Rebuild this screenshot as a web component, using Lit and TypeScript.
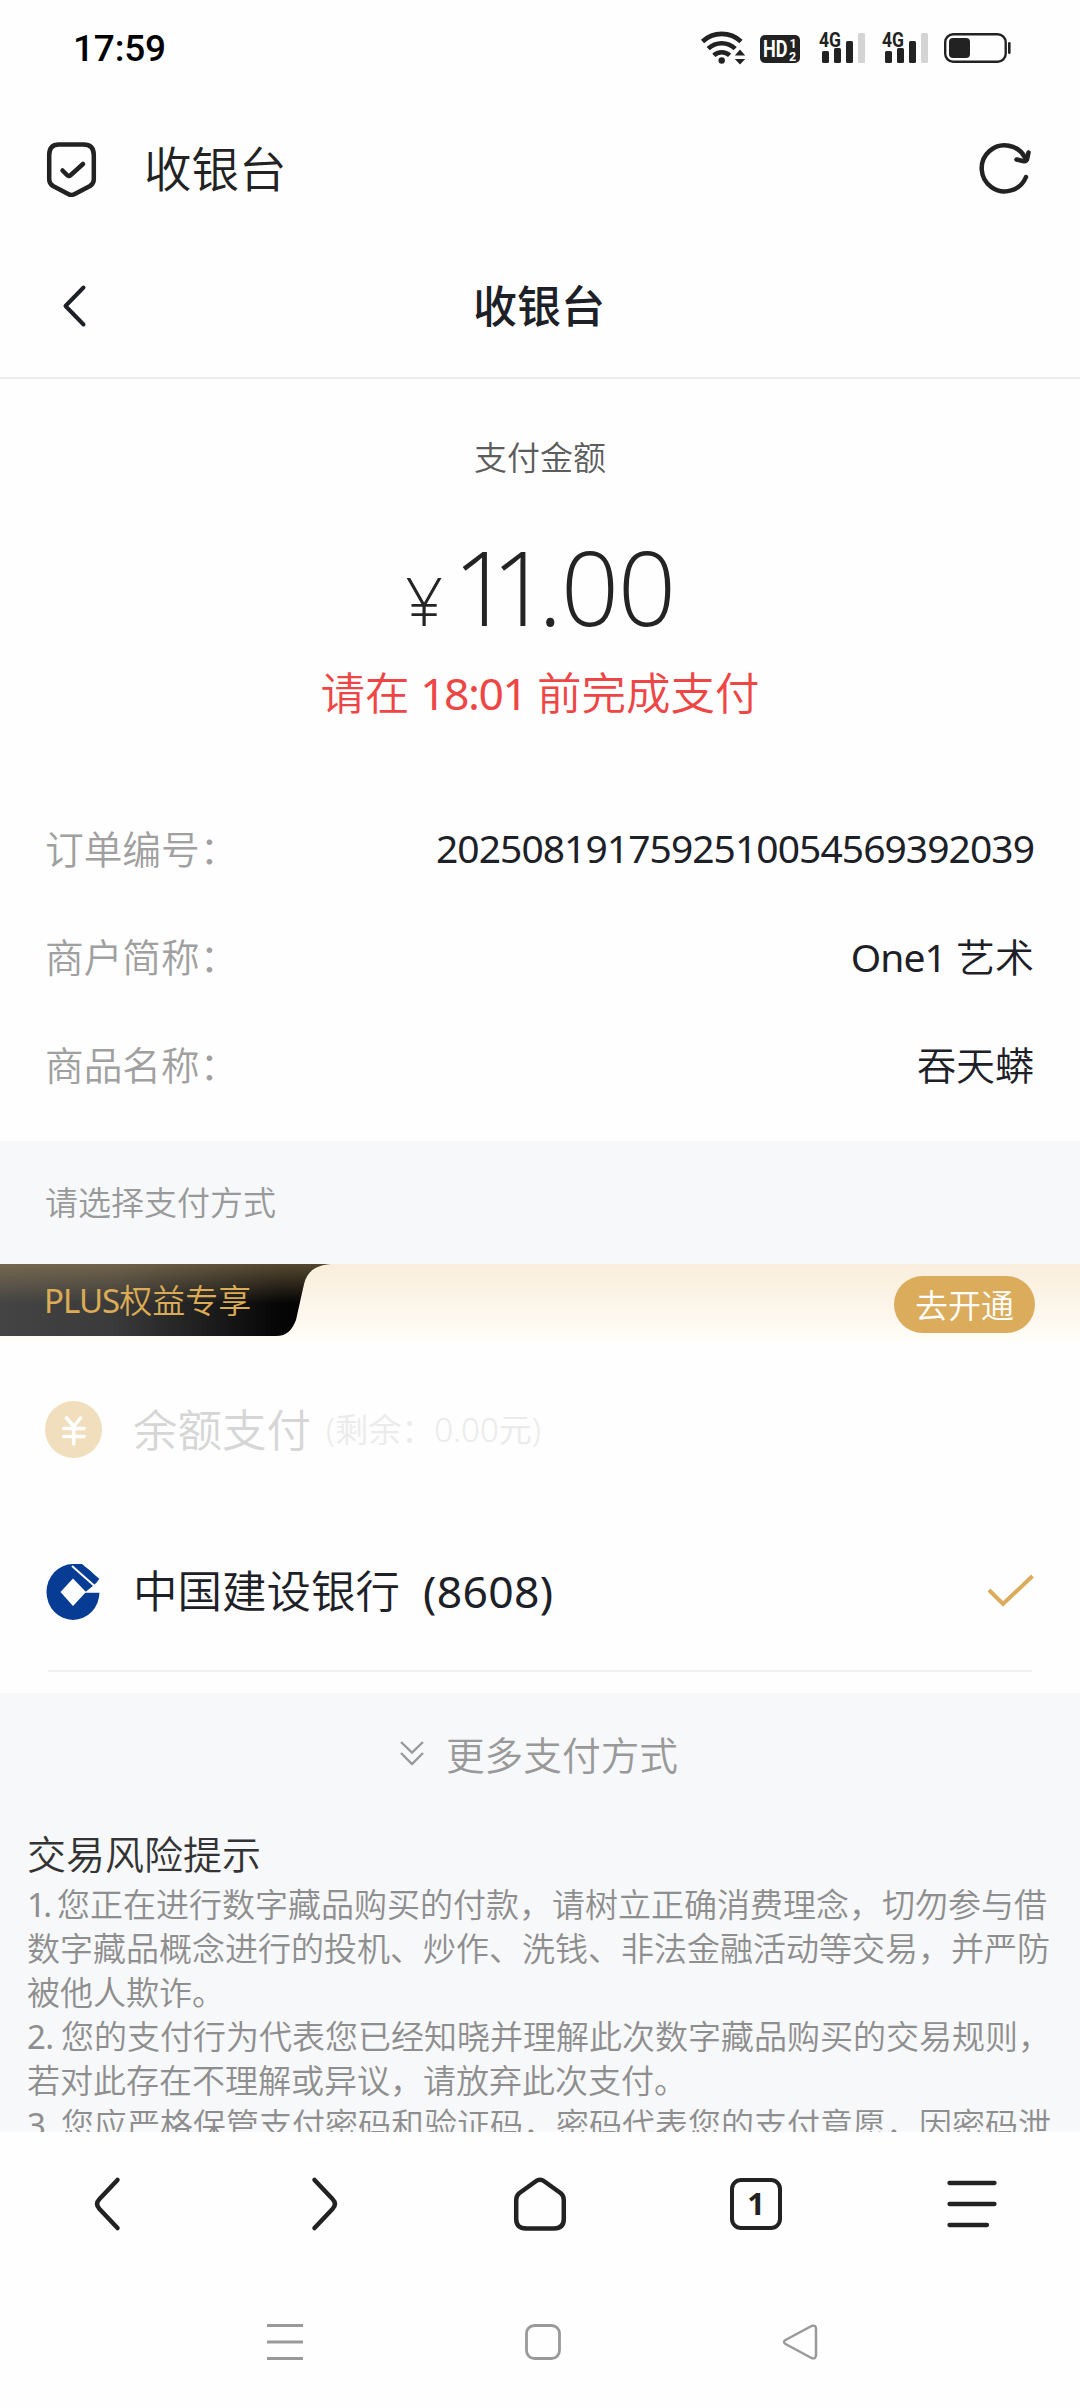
import { LitElement, html, css, svg } from "lit";
import { customElement } from "lit/decorators.js";

const ORDER_ROWS = [
  { label: "订单编号：", latin: "2025081917592510054569392039", rest: "" },
  { label: "商户简称：", latin: "One1", rest: " 艺术" },
  { label: "商品名称：", latin: "", rest: "吞天蟒" },
];

const RISK_LINES = [
  { mark: "1.", text: " 您正在进行数字藏品购买的付款，请树立正确消费理念，切勿参与借" },
  { mark: "", text: "数字藏品概念进行的投机、炒作、洗钱、非法金融活动等交易，并严防" },
  { mark: "", text: "被他人欺诈。" },
  { mark: "2.", text: " 您的支付行为代表您已经知晓并理解此次数字藏品购买的交易规则，" },
  { mark: "", text: "若对此存在不理解或异议，请放弃此次支付。" },
  { mark: "3.", text: " 您应严格保管支付密码和验证码，密码代表您的支付意愿，因密码泄" },
];

const signal = (x: number) => svg`
  <g transform="translate(${x} 0)">
    <text x="0" y="17.500" font-size="21" font-weight="700" textLength="22" lengthAdjust="spacingAndGlyphs" fill="#222">4G</text>
    <rect x="3" y="22" width="7" height="12" rx="1.5" fill="#222"/>
    <rect x="15" y="19" width="7" height="15" rx="1.5" fill="#222"/>
    <rect x="27" y="12" width="7" height="22" rx="1.5" fill="#222"/>
    <rect x="39" y="4" width="7" height="30" rx="1.5" fill="#d4d4d4"/>
  </g>`;

@customElement("status-bar")
export class StatusBar extends LitElement {
  static styles = css`
    :host {
      display: flex;
      justify-content: space-between;
      height: 97px;
      padding: 0 67px 0 73px;
      box-sizing: border-box;
    }
    .time {
      font-family: Roboto, "Noto Sans", sans-serif;
      font-size: 37px;
      font-weight: 500;
      line-height: 98px;
      letter-spacing: -0.200px;
      color: #000;
    }
    .icons {
      display: block;
      overflow: visible;
      margin-top: 29px;
      font-family: Roboto, "Liberation Sans", sans-serif;
    }
  `;
  render() {
    return html`
      <span class="time">17:59</span>
      <svg class="icons" width="314" height="40" viewBox="0 0 314 40">
        <g fill="none" stroke="#222" stroke-width="4.6">
          <path d="M3.5 12.5a28 28 0 0 1 38.500 0"/>
          <path d="M9.200 19.700a19.500 19.500 0 0 1 27 0"/>
          <path d="M14.800 26.400a11.500 11.500 0 0 1 15.800 0"/>
        </g>
        <circle cx="22.700" cy="31.500" r="3.200" fill="#222"/>
        <path d="M41 20.500l5.200 6h-10.400zM41 35.500l5.200-5.500h-10.400z" fill="#222"/>
        <rect x="61" y="6" width="40" height="28" rx="5" fill="#222"/>
        <text x="64" y="28.200" font-size="23" font-weight="700" fill="#fff" textLength="24.500" lengthAdjust="spacingAndGlyphs">HD</text>
        <text x="90.500" y="18.800" font-size="12.500" font-weight="700" fill="#fff">1</text>
        <text x="90" y="31.500" font-size="12.500" font-weight="700" fill="#fff">2</text>
        ${signal(120)} ${signal(183)}
        <rect x="246.200" y="5.200" width="60.500" height="27.600" rx="8" fill="none" stroke="#222" stroke-width="2.400"/>
        <rect x="250" y="9" width="21" height="20" rx="4" fill="#222"/>
        <rect x="309" y="13" width="2.600" height="12" rx="1.300" fill="#222"/>
      </svg>
    `;
  }
}

@customElement("pay-methods")
export class PayMethods extends LitElement {
  static styles = css`
    :host {
      display: block;
      height: 429px;
      background: #fefefe;
    }
    .plus {
      display: flex;
      justify-content: space-between;
      height: 83px;
      padding-right: 45px;
      background: linear-gradient(#f9eedb 0%, #fcf5ea 50%, #fffdf7 90%, #fefefe 100%);
    }
    .tab {
      display: grid;
      width: 332px;
      height: 72px;
    }
    .tab > * {
      grid-area: 1 / 1;
    }
    .tab-text {
      padding-left: 44px;
      line-height: 74px;
      font-size: 33px;
      color: #dcab55;
      white-space: nowrap;
      z-index: 1;
    }
    .latin {
      font-weight: 400;
    }
    .tab-text .latin {
      letter-spacing: -1px;
    }
    .open {
      margin-top: 12px;
      width: 141px;
      height: 57px;
      line-height: 59px;
      border-radius: 29px;
      background: #dbac5c;
      color: #fff;
      font-size: 33px;
      text-align: center;
    }
    .row {
      display: flex;
      align-items: center;
      padding: 0 45px;
      font-size: 44.500px;
      line-height: 60px;
    }
    .balance {
      height: 165px;
      color: #d6d6d6;
    }
    .bank {
      height: 158px;
      color: #1d2127;
      border-bottom: 2px solid #f0f0f2;
      margin: 0 48px;
      padding: 0;
    }
    .name {
      margin-left: 31px;
    }
    .bank .icon {
      margin-left: -3px;
    }
    .bank .card {
      margin-left: 23px;
      font-weight: 400;
      letter-spacing: 0.300px;
    }
    .bank .tick {
      margin: 0 -3px 0 auto;
    }
    .remain {
      margin-left: 15px;
      font-size: 33px;
      color: #ebebeb;
    }
  `;
  render() {
    return html`
      <div class="plus">
        <div class="tab">
          <svg width="332" height="72" viewBox="0 0 332 72">
            <defs>
              <linearGradient id="base" x1="0" y1="0" x2="1" y2="0">
                <stop offset="0" stop-color="#444"/>
                <stop offset="0.350" stop-color="#3a3a3a"/>
                <stop offset="0.850" stop-color="#050505"/>
                <stop offset="1" stop-color="#000"/>
              </linearGradient>
              <linearGradient id="shine" x1="0" y1="0" x2="0" y2="1">
                <stop offset="0" stop-color="#a88c5c" stop-opacity="0.500"/>
                <stop offset="0.550" stop-color="#a88c5c" stop-opacity="0"/>
              </linearGradient>
            </defs>
            <path fill="url(#base)" d="M0 0H331C316 1 307 7 304 20L296 56C292 66 287 72 276 72H0Z"/>
            <path fill="url(#shine)" d="M0 0H331C316 1 307 7 304 20L296 56C292 66 287 72 276 72H0Z"/>
          </svg>
          <span class="tab-text"><span class="latin">PLUS</span>权益专享</span>
        </div>
        <div class="open">去开通</div>
      </div>
      <div class="row balance">
        <svg class="icon" width="57" height="57" viewBox="0 0 57 57">
          <circle cx="28.500" cy="28.500" r="28.500" fill="#f1debc"/>
          <path d="M21.500 17L28.700 25.500L35.500 17M28.700 25.500V43M18.500 27.500H39M18.500 35.500H39" fill="none" stroke="#fff" stroke-width="3.600" stroke-linecap="round"/>
        </svg>
        <span class="name">余额支付</span>
        <span class="remain">(剩余：0.00元)</span>
      </div>
      <div class="row bank">
        <svg class="icon" width="57" height="57" viewBox="0 0 57 57">
          <ellipse cx="28" cy="29" rx="26.500" ry="28" fill="#063c93"/>
          <path d="M26 1H37L54.500 16L48 23Z" fill="#063c93"/>
          <path d="M28 15.500L41 29L28 43L15.500 29Z" fill="#fff"/>
          <path d="M39.500 29.800L48.500 22.500L60 11V29.800Z" fill="#fff"/>
          <path d="M27 3L49 22.500" stroke="#fff" stroke-width="2"/>
        </svg>
        <span class="name">中国建设银行</span>
        <span class="card">(8608)</span>
        <svg class="tick" width="50" height="40" viewBox="0 0 50 40">
          <path d="M4 19L18 33L47.500 5" fill="none" stroke="#dbac5c" stroke-width="4"/>
        </svg>
      </div>
    `;
  }
}

@customElement("app-root")
export class AppRoot extends LitElement {
  static styles = css`
    :host {
      display: flex;
      flex-direction: column;
      width: 1080px;
      height: 2408px;
      overflow: hidden;
      background: #fefefe;
      font-family: "Noto Sans", "Noto Sans CJK SC", sans-serif;
      font-weight: 350;
      color: #1d2127;
    }
    .browser {
      display: flex;
      align-items: center;
      height: 144px;
      padding: 0 46px;
      box-sizing: border-box;
    }
    .browser .title {
      flex: 1;
      margin-left: 46px;
      font-size: 47.500px;
      line-height: 60px;
      color: #222;
    }
    .page {
      height: 1891px;
      overflow: hidden;
      background: #fefefe;
    }
    .head {
      display: grid;
      box-sizing: border-box;
      grid-template-columns: 1fr auto 1fr;
      align-items: center;
      height: 138px;
      padding: 0 63px 6px 61px;
      border-bottom: 2px solid #ededed;
    }
    .head .title {
      font-size: 44px;
      line-height: 60px;
      font-weight: 500;
    }
    .amount-block {
      display: flex;
      flex-direction: column;
      align-items: center;
      height: 414px;
    }
    .caption {
      margin-top: 54px;
      font-size: 33px;
      line-height: 50px;
      color: #5c5c5c;
    }
    .amount {
      display: flex;
      align-items: baseline;
      margin: 33px 0 0 0;
      font-family: "Open Sans", "Noto Sans", sans-serif;
      font-weight: 300;
      line-height: 140px;
      color: #242424;
    }
    .yen {
      font-size: 66px;
      margin-right: 10px;
    }
    .sum {
      font-size: 102.500px;
      letter-spacing: -1.500px;
    }
    .sum .ones {
      letter-spacing: -20px;
    }
    .sum .dot {
      margin-left: 8px;
    }
    .deadline {
      margin-top: -7px;
      font-size: 44.500px;
      line-height: 60px;
      word-spacing: -1px;
      color: #ee4545;
    }
    .clock {
      font-weight: 400;
      letter-spacing: -1.500px;
    }
    .details {
      height: 348px;
    }
    .detail {
      display: flex;
      justify-content: space-between;
      align-items: center;
      height: 108px;
      padding: 0 46px 0 45px;
      font-size: 39px;
    }
    .detail .label {
      color: #a0a0a0;
      font-size: 38.700px;
    }
    .detail .latin {
      font-weight: 400;
      letter-spacing: -0.950px;
    }
    .pick {
      height: 123px;
      line-height: 124px;
      padding-left: 45px;
      background: #f7f8fa;
      font-size: 33px;
      color: #999;
    }
    .foot {
      height: 439px;
      background: #f7f8fa;
      overflow: hidden;
    }
    .more {
      display: flex;
      justify-content: center;
      align-items: center;
      gap: 20px;
      height: 120px;
      padding-right: 4px;
      font-size: 38.700px;
      color: #999;
    }
    .risk-title {
      padding-left: 27px;
      margin-top: 16px;
      font-size: 39px;
      line-height: 50px;
      color: #333;
    }
    .risk {
      padding: 4px 0 0 27px;
      font-size: 33px;
      line-height: 44.100px;
      word-spacing: -1px;
      color: #8e8e8e;
    }
    .risk-line {
      white-space: nowrap;
    }
    .mark {
      font-weight: 400;
      letter-spacing: -0.700px;
    }
    .risk-line:first-child .mark {
      letter-spacing: -2.700px;
    }
    .tools {
      display: grid;
      grid-template-columns: repeat(5, 216px);
      justify-items: center;
      align-items: center;
      height: 144px;
    }
    .tab-count {
      box-sizing: border-box;
      width: 52px;
      height: 52px;
      border: 4.500px solid #222;
      border-radius: 11px;
      font: 700 31px/43px "Noto Sans", sans-serif;
      text-align: center;
      color: #222;
    }
    .system {
      display: grid;
      grid-template-columns: 258px 258px 258px;
      justify-content: center;
      justify-items: center;
      align-items: center;
      height: 132px;
    }
  `;
  render() {
    return html`
      <status-bar></status-bar>
      <div class="browser">
        <svg width="52" height="56" viewBox="0 0 52 56">
          <g fill="none" stroke="#222" stroke-width="4.500" stroke-linecap="round" stroke-linejoin="round">
            <path d="M13 3.500H37.500Q47.800 3.500 47.800 14V38.500Q47.800 42.500 44 45L28.800 53Q25.500 54.800 22.200 53L7 45Q3.200 42.500 3.200 38.500V14Q3.200 3.500 13 3.500Z"/>
            <path d="M16.500 29.500L21 34Q22.800 35.800 24.800 34L37 23"/>
          </g>
        </svg>
        <span class="title">收银台</span>
        <svg width="56" height="56" viewBox="0 0 56 56">
          <g fill="none" stroke="#222" stroke-width="4.500" stroke-linecap="round" stroke-linejoin="round">
            <path d="M48 36A23 23 0 1 1 47 16.500"/>
            <path d="M38.500 18.500L46 20.300Q48 20.500 49 18.500L50.500 11.500"/>
          </g>
        </svg>
      </div>
      <div class="page">
        <div class="head">
          <svg width="28" height="46" viewBox="0 0 28 46">
            <path d="M22.500 4.500L4.500 23L22.500 41.500" fill="none" stroke="#1d2127" stroke-width="4" stroke-linecap="round" stroke-linejoin="round"/>
          </svg>
          <span class="title">收银台</span>
        </div>
        <div class="amount-block">
          <div class="caption">支付金额</div>
          <div class="amount">
            <span class="yen">¥</span>
            <span class="sum"><span class="ones">11</span><span class="dot">.</span>00</span>
          </div>
          <div class="deadline">请在 <span class="clock">18:01</span> 前完成支付</div>
        </div>
        <div class="details">
          ${ORDER_ROWS.map(
            (r) => html`<div class="detail">
              <span class="label">${r.label}</span>
              <span><span class="latin">${r.latin}</span>${r.rest}</span>
            </div>`
          )}
        </div>
        <div class="pick">请选择支付方式</div>
        <pay-methods></pay-methods>
        <div class="foot">
          <div class="more">
            <svg width="28" height="28" viewBox="0 0 28 28">
              <path d="M3 3L14 13.500L25 3M3 14L14 25L25 14" fill="none" stroke="#999" stroke-width="2.400"/>
            </svg>
            <span>更多支付方式</span>
          </div>
          <div class="risk-title">交易风险提示</div>
          <div class="risk">
            ${RISK_LINES.map(
              (l) => html`<div class="risk-line"><span class="mark">${l.mark}</span>${l.text}</div>`
            )}
          </div>
        </div>
      </div>
      <div class="tools">
        <svg width="60" height="60" viewBox="0 0 60 60">
          <path d="M39.500 6L21.500 25Q16.500 30 21.500 35L39.500 54" fill="none" stroke="#222" stroke-width="4.500" stroke-linecap="round"/>
        </svg>
        <svg width="60" height="60" viewBox="0 0 60 60">
          <path d="M20.500 6L38.500 25Q43.500 30 38.500 35L20.500 54" fill="none" stroke="#222" stroke-width="4.500" stroke-linecap="round"/>
        </svg>
        <svg width="60" height="60" viewBox="0 0 60 60">
          <path d="M25.500 7.500Q30 4 34.500 7.500L50.500 19Q53.800 21.500 53.800 26V45Q53.800 54.500 44 54.500H16Q6.200 54.500 6.200 45V26Q6.200 21.500 9.500 19Z" fill="none" stroke="#222" stroke-width="4.500" stroke-linejoin="round"/>
        </svg>
        <div class="tab-count">1</div>
        <svg width="60" height="60" viewBox="0 0 60 60">
          <path d="M7.500 9H52.500M7.500 30H52.500M7.500 51H45" fill="none" stroke="#222" stroke-width="4.300" stroke-linecap="round"/>
        </svg>
      </div>
      <div class="system">
        <svg width="48" height="48" viewBox="0 0 48 48">
          <path d="M9 7.500H45M9 24H45M9 40.500H45" stroke="#999" stroke-width="3"/>
        </svg>
        <svg width="48" height="48" viewBox="0 0 48 48">
          <rect x="10.500" y="7.500" width="33" height="33" rx="8" fill="none" stroke="#999" stroke-width="2.800"/>
        </svg>
        <svg width="48" height="48" viewBox="0 0 48 48">
          <path d="M11.500 22L37.500 8Q42 6.500 42 11V37Q42 41.500 37.500 40L11.500 26Q8.500 24 11.500 22Z" fill="none" stroke="#999" stroke-width="2.500" stroke-linejoin="round"/>
        </svg>
      </div>
    `;
  }
}
